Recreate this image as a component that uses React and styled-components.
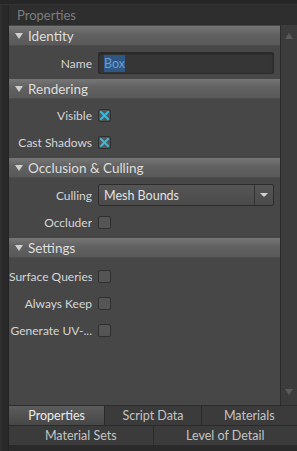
import React from "react";
import styled, { createGlobalStyle } from "styled-components";

const GlobalStyle = createGlobalStyle`
  html, body { margin: 0; padding: 0; background: #2a2a2a; }
  body { font-family: Lato, "Liberation Sans", sans-serif; }
  * { box-sizing: border-box; }
`;

const Window = styled.div`
  width: 297px;
  height: 451px;
  display: flex;
  flex-direction: column;
  background: #2a2a2a;
  overflow: hidden;
`;

const TopStrip = styled.div`
  height: 5px;
  background: #262626;
  border-bottom: 1px solid #343434;
`;

const Body = styled.div`
  flex: 1;
  display: flex;
  min-height: 0;
`;

const Gutter = styled.div`
  width: 9px;
  background: #292929;
  border-left: 2px solid #2f2f2f;
  border-right: 1px solid #232323;
`;

const Dock = styled.div`
  flex: 1;
  display: flex;
  flex-direction: column;
  min-width: 0;
`;

const DockTitle = styled.div`
  height: 20px;
  display: flex;
  align-items: center;
  padding-left: 8px;
  background: #2e2e2e;
  color: #7d7d7d;
  font-size: 13px;
`;

const Content = styled.div`
  flex: 1;
  display: flex;
  min-height: 0;
  background: #474747;
`;

const Sections = styled.div`
  flex: 1;
  display: flex;
  flex-direction: column;
  padding-top: 1px;
  min-width: 0;
`;

const SectionHeader = styled.div`
  height: 20px;
  display: flex;
  align-items: center;
  gap: 5px;
  padding-left: 6px;
  background: linear-gradient(#767676, #616161 45%, #595959);
  border-bottom: 1px solid #4c4c4c;
  color: #dedede;
  font-size: 13.5px;
`;

const Caret = styled.span`
  width: 0;
  height: 0;
  border-left: 4px solid transparent;
  border-right: 4px solid transparent;
  border-top: 6px solid #d0d0d0;
`;

const SectionBody = styled.div`
  padding: ${(p) => p.$top}px 0 2px;
`;

const Row = styled.div`
  height: ${(p) => (p.$tall ? 28 : 27)}px;
  display: flex;
  align-items: center;
  gap: 6px;
`;

const Label = styled.div`
  width: 83px;
  text-align: right;
  color: #d6d6d6;
  font-size: 12px;
  white-space: nowrap;
  overflow: hidden;
  flex-shrink: 0;
`;

const TextField = styled.div`
  width: 176px;
  height: 22px;
  display: flex;
  align-items: center;
  padding-left: 5px;
  background: #363636;
  border: 1px solid #2a2a2a;
  border-radius: 2px;
  box-shadow: inset 0 1px 2px rgba(0, 0, 0, 0.35);
  font-size: 12.5px;
`;

const Selected = styled.span`
  background: #2d5886;
  color: #6b9dd3;
  padding: 1px 0;
`;

const Select = styled.div`
  width: 176px;
  height: 22px;
  display: flex;
  background: linear-gradient(#555555, #4a4a4a);
  border: 1px solid #2c2c2c;
  border-radius: 2px;
  color: #e2e2e2;
  font-size: 12.5px;
`;

const SelectValue = styled.div`
  flex: 1;
  display: flex;
  align-items: center;
  padding-left: 5px;
`;

const SelectArrow = styled.div`
  width: 19px;
  display: flex;
  align-items: center;
  justify-content: center;
  border-left: 1px solid #333333;
  &::after {
    content: "";
    border-left: 4px solid transparent;
    border-right: 4px solid transparent;
    border-top: 4px solid #d4d4d4;
  }
`;

const Check = styled.div`
  width: 13px;
  height: 13px;
  display: flex;
  align-items: center;
  justify-content: center;
  background: #555555;
  border: 1px solid #2f2f2f;
  border-radius: 2px;
`;

const Scrollbar = styled.div`
  width: 17px;
  display: flex;
  flex-direction: column;
  justify-content: space-between;
  align-items: center;
  padding: 8px 0 10px;
  background: #3c3c3c;
  border-left: 1px solid #2b2b2b;
`;

const ScrollArrow = styled.span`
  width: 0;
  height: 0;
  border-left: 4px solid transparent;
  border-right: 4px solid transparent;
  ${(p) =>
    p.$up
      ? "border-bottom: 6px solid #5a5a5a;"
      : "border-top: 6px solid #5a5a5a;"}
`;

const Tabs = styled.div`
  display: flex;
  flex-direction: column;
  background: #2a2a2a;
  border-top: 1px solid #2c2c2c;
  padding-bottom: 5px;
`;

const TabRow = styled.div`
  display: flex;
  height: 20px;
`;

const Tab = styled.div`
  flex: 1;
  display: flex;
  align-items: center;
  justify-content: center;
  font-size: 12.5px;
  color: ${(p) => (p.$active ? "#ececec" : "#c4c4c4")};
  background: ${(p) =>
    p.$active ? "linear-gradient(#5c5c5c, #474747)" : "#3b3b3b"};
  border-right: 1px solid #2a2a2a;
  border-bottom: 1px solid #2a2a2a;
  &:last-child { border-right: none; }
`;

const CheckMark = () => (
  <svg width="9" height="9" viewBox="0 0 9 9">
    <path d="M1 1 L8 8 M8 1 L1 8" stroke="#3ab6d9" strokeWidth="2.2" strokeLinecap="square" />
  </svg>
);

const Section = ({ title, top = 3, children }) => (
  <>
    <SectionHeader>
      <Caret />
      {title}
    </SectionHeader>
    <SectionBody $top={top}>{children}</SectionBody>
  </>
);

const CheckRow = ({ label, checked }) => (
  <Row>
    <Label>{label}</Label>
    <Check>{checked && <CheckMark />}</Check>
  </Row>
);

export default function App() {
  return (
    <Window>
      <GlobalStyle />
      <TopStrip />
      <Body>
        <Gutter />
        <Dock>
          <DockTitle>Properties</DockTitle>
          <Content>
            <Sections>
              <Section title="Identity">
                <Row $tall>
                  <Label>Name</Label>
                  <TextField>
                    <Selected>Box</Selected>
                  </TextField>
                </Row>
              </Section>
              <Section title="Rendering">
                <CheckRow label="Visible" checked />
                <CheckRow label="Cast Shadows" checked />
              </Section>
              <Section title="Occlusion & Culling">
                <Row $tall>
                  <Label>Culling</Label>
                  <Select>
                    <SelectValue>Mesh Bounds</SelectValue>
                    <SelectArrow />
                  </Select>
                </Row>
                <CheckRow label="Occluder" />
              </Section>
              <Section title="Settings" top={5}>
                <CheckRow label="Surface Queries" />
                <CheckRow label="Always Keep" />
                <CheckRow label="Generate UV-..." />
              </Section>
            </Sections>
            <Scrollbar>
              <ScrollArrow $up />
              <ScrollArrow />
            </Scrollbar>
          </Content>
          <Tabs>
            <TabRow>
              <Tab $active>Properties</Tab>
              <Tab>Script Data</Tab>
              <Tab>Materials</Tab>
            </TabRow>
            <TabRow>
              <Tab>Material Sets</Tab>
              <Tab>Level of Detail</Tab>
            </TabRow>
          </Tabs>
        </Dock>
      </Body>
    </Window>
  );
}
